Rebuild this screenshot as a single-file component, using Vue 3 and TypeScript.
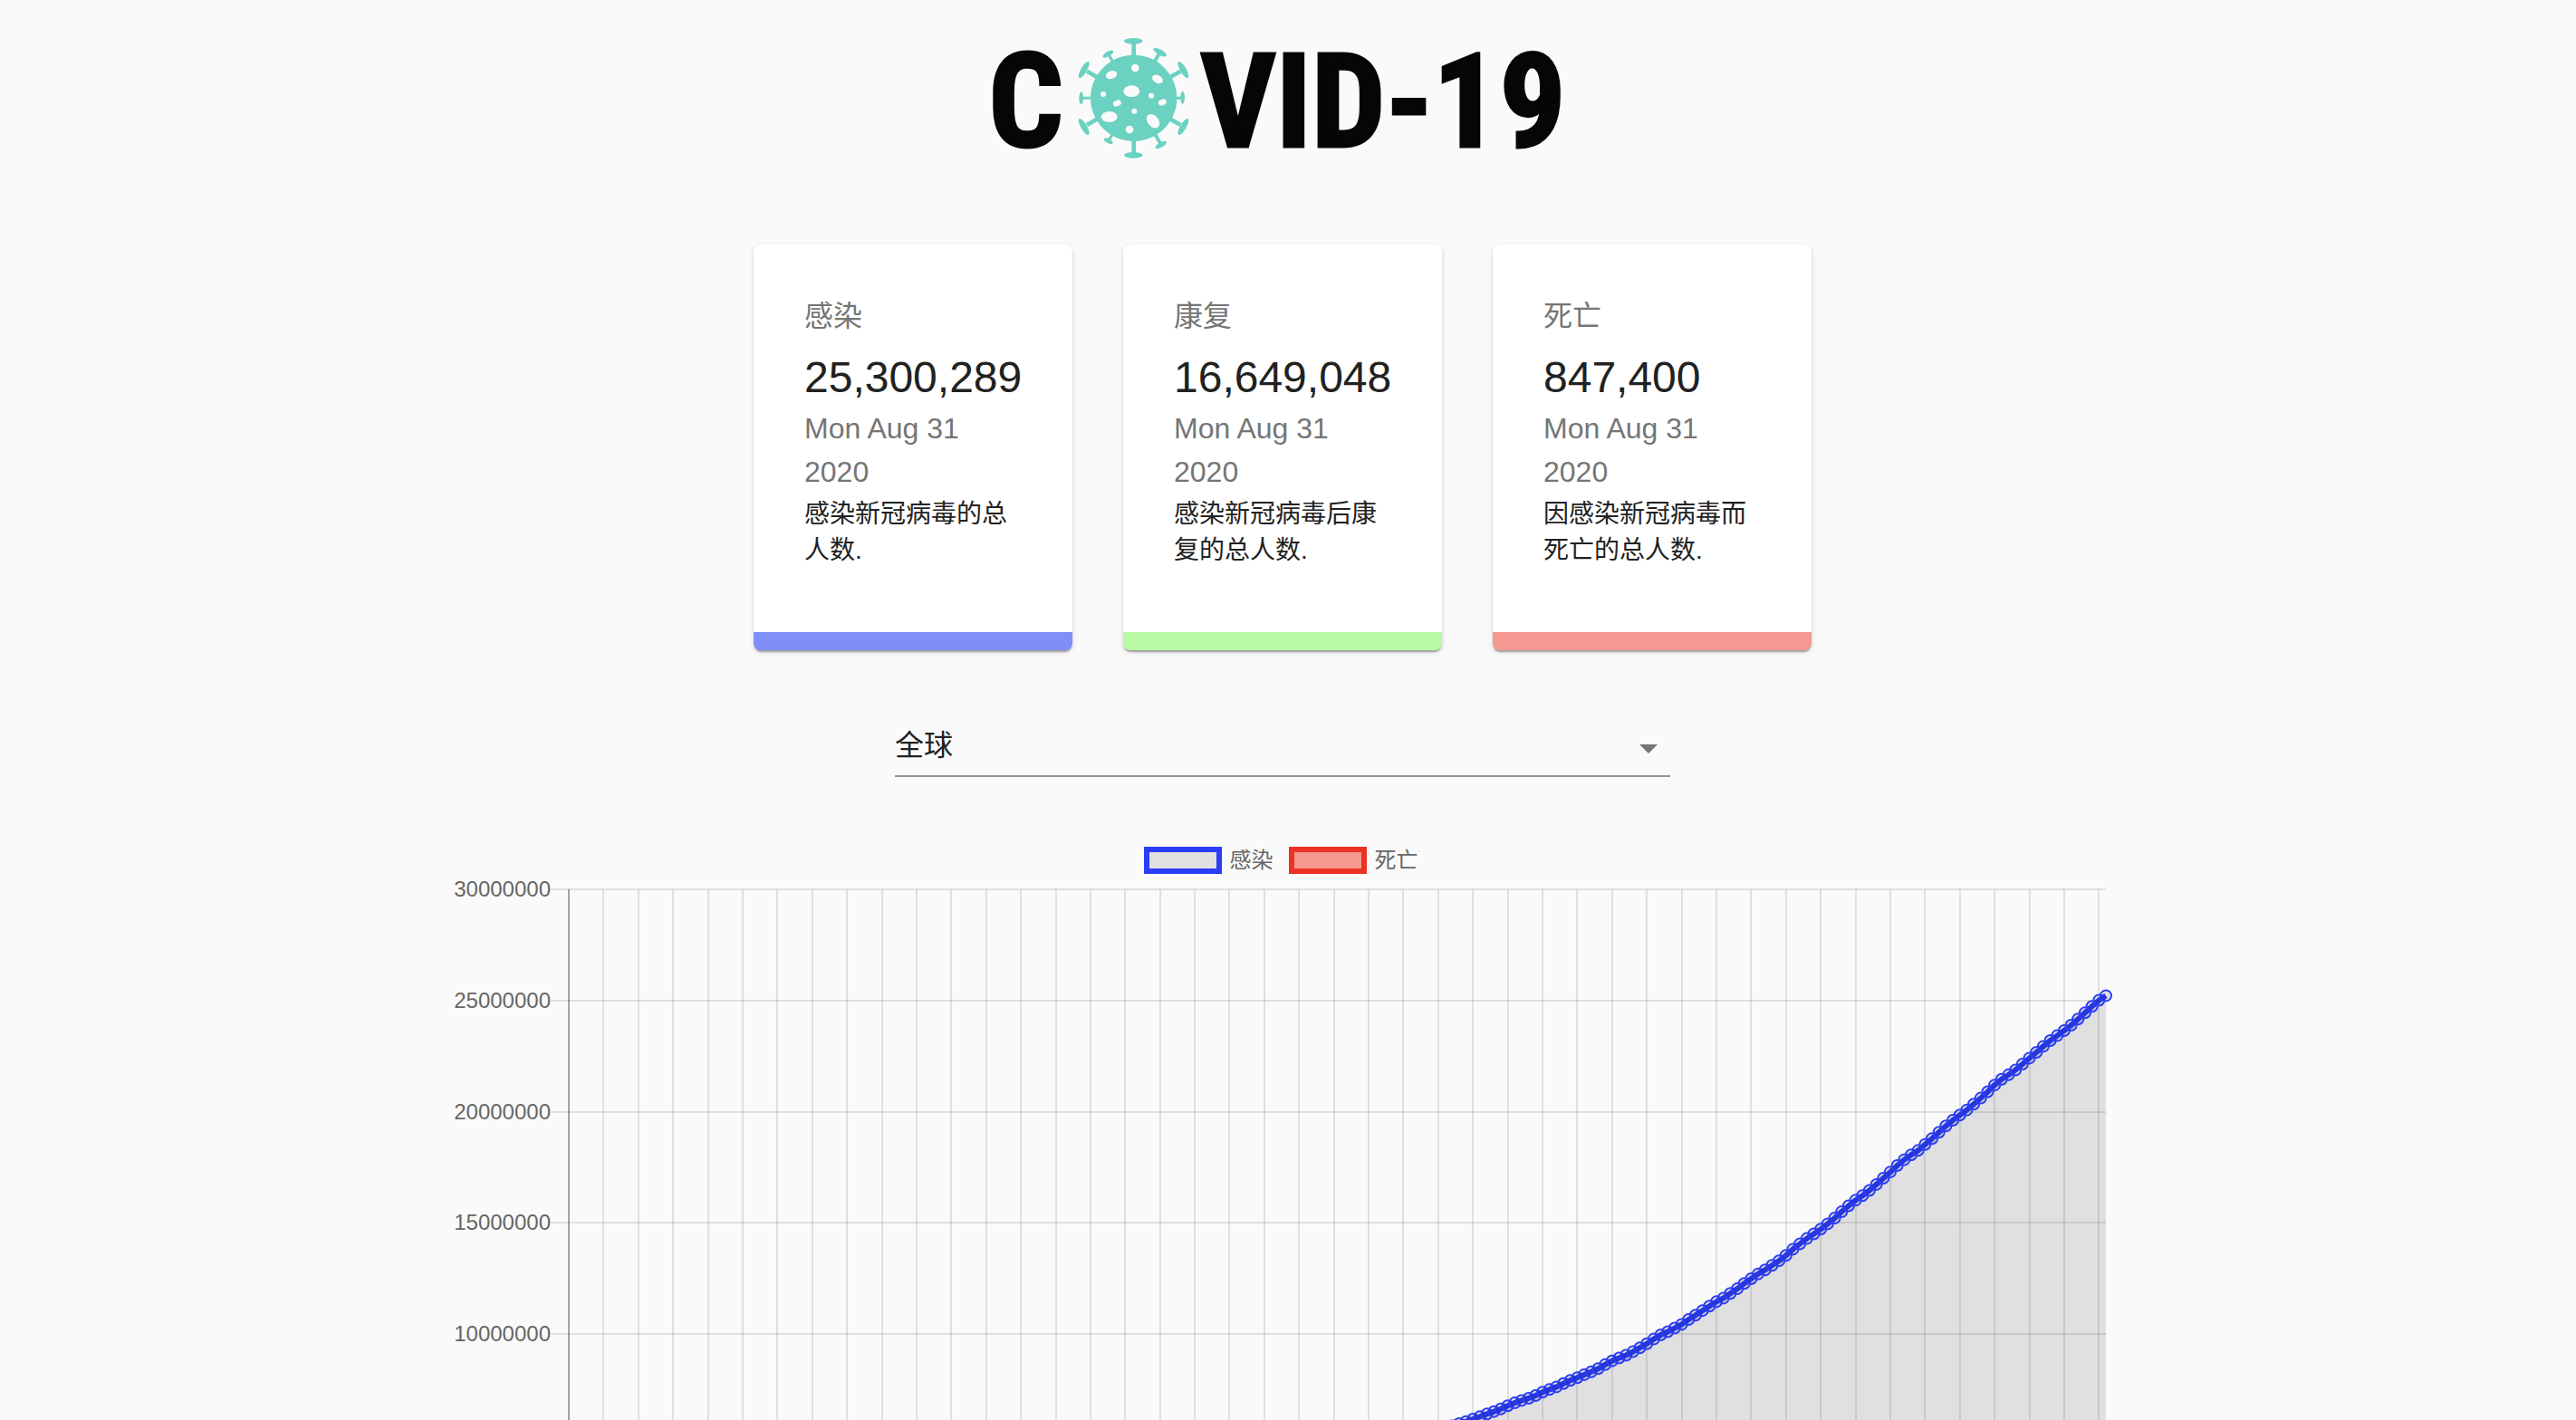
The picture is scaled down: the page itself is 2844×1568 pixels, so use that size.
<script setup lang="ts">
import { ref } from 'vue'

interface Stat {
  key: string
  title: string
  value: number
  note: string
}

const updated = 'Mon Aug 31 2020'
const stats: Stat[] = [
  { key: 'infected', title: '感染', value: 25300289, note: '感染新冠病毒的总人数.' },
  { key: 'recovered', title: '康复', value: 16649048, note: '感染新冠病毒后康复的总人数.' },
  { key: 'deaths', title: '死亡', value: 847400, note: '因感染新冠病毒而死亡的总人数.' },
]
const format = (n: number) => n.toLocaleString('en-US')

const country = ref('global')

/* Plot geometry, in viewBox units */
const plot = { left: 128, right: 1825, top: 14, days: 222, height: 760 }
const ticks = [30000000, 25000000, 20000000, 15000000, 10000000]
const tickY = (i: number) => Math.round(plot.top + i * 122.8)
const dayX = (i: number) => plot.left + (i * (plot.right - plot.left)) / (plot.days - 1)
const columns = Array.from({ length: 44 }, (_, i) => Math.round(dayX((i + 1) * 5)))

/* Cumulative infections in ten thousands, one value per day from day 120 */
const curve: number[] = [
  515, 525, 535, 546, 556, 567, 577, 588, 598, 607, 618, 629, 641, 652, 664, 678, 691, 702, 712, 724,
  739, 751, 763, 778, 792, 804, 818, 831, 845, 863, 880, 893, 905, 921, 939, 957, 978, 997, 1011, 1027,
  1044, 1066, 1085, 1106, 1126, 1146, 1162, 1183, 1204, 1228, 1249, 1271, 1289, 1309, 1330, 1354, 1382, 1406, 1430, 1451,
  1472, 1496, 1522, 1550, 1577, 1602, 1623, 1646, 1673, 1701, 1729, 1758, 1784, 1806, 1826, 1853, 1879, 1908, 1936, 1962,
  1985, 2008, 2034, 2061, 2090, 2120, 2146, 2166, 2188, 2214, 2241, 2267, 2294, 2320, 2342, 2365, 2389, 2417, 2445, 2474,
  2501, 2522,
]
const early = 120
const valueY = (v: number) => plot.top + ((3000 - v) * 122.8) / 500
const points = curve.map((v, i) => ({ x: dayX(early + i), y: valueY(v) }))
const line = points.map((p) => `${p.x.toFixed(1)},${p.y.toFixed(1)}`).join(' ')
const area = `${points[0].x},${valueY(0)} ${line} ${plot.right},${valueY(0)}`
</script>

<template>
  <main class="page">
    <h1 class="logo" aria-label="COVID-19">
      <span>C</span>
      <svg class="virus" viewBox="270 65 369 399" aria-hidden="true">
        <g fill="none" stroke="#6bd1c1" stroke-width="14">
          <path d="M455 75V455M300 175L610 353M300 353L610 175" />
          <path d="M280 264H618" stroke-width="9" />
          <path d="M542 112L455 264L545 417" stroke-width="12" />
          <path d="M372 120L455 264L372 405" stroke-width="9" />
        </g>
        <g fill="#6bd1c1">
          <circle cx="455" cy="264" r="143" />
          <ellipse cx="454" cy="75" rx="31" ry="10" />
          <ellipse cx="454" cy="453" rx="31" ry="10" />
          <ellipse cx="281" cy="264" rx="7" ry="21" />
          <ellipse cx="617" cy="262" rx="7" ry="21" />
          <ellipse cx="290" cy="170" rx="10" ry="31" transform="rotate(30 290 170)" />
          <ellipse cx="619" cy="170" rx="10" ry="31" transform="rotate(-30 619 170)" />
          <ellipse cx="290" cy="359" rx="10" ry="31" transform="rotate(-30 290 359)" />
          <ellipse cx="619" cy="359" rx="10" ry="31" transform="rotate(30 619 359)" />
          <ellipse cx="370" cy="118" rx="20" ry="8" transform="rotate(-30 370 118)" />
          <ellipse cx="542" cy="112" rx="25" ry="9" transform="rotate(30 542 112)" />
          <ellipse cx="371" cy="406" rx="16" ry="7" transform="rotate(28 371 406)" />
          <ellipse cx="545" cy="419" rx="21" ry="8" transform="rotate(-30 545 419)" />
        </g>
        <g fill="#fafafa">
          <circle cx="460" cy="164" r="13" />
          <ellipse cx="381" cy="187" rx="19" ry="13" transform="rotate(-18 381 187)" />
          <ellipse cx="534" cy="201" rx="19" ry="13" transform="rotate(28 534 201)" />
          <ellipse cx="448" cy="241" rx="27" ry="19" />
          <circle cx="354" cy="251" r="9" />
          <circle cx="513" cy="256" r="9" />
          <ellipse cx="400" cy="281" rx="14" ry="10" transform="rotate(-22 400 281)" />
          <ellipse cx="550" cy="278" rx="14" ry="10" transform="rotate(-22 550 278)" />
          <circle cx="457" cy="307" r="9" />
          <ellipse cx="374" cy="326" rx="27" ry="18" />
          <ellipse cx="519" cy="340" rx="26" ry="18" transform="rotate(52 519 340)" />
          <circle cx="441" cy="368" r="13" />
        </g>
      </svg>
      <span>VID-19</span>
    </h1>

    <section class="cards">
      <article v-for="s in stats" :key="s.key" class="card" :class="s.key">
        <h2 class="card-title">{{ s.title }}</h2>
        <p class="card-value">{{ format(s.value) }}</p>
        <p class="card-date">{{ updated }}</p>
        <p class="card-note">{{ s.note }}</p>
      </article>
    </section>

    <div class="picker">
      <select v-model="country" aria-label="国家">
        <option value="global">全球</option>
      </select>
      <svg class="arrow" viewBox="0 0 20 10" aria-hidden="true"><path d="M0 0h20L10 10z" /></svg>
    </div>

    <figure class="chart">
      <figcaption class="legend">
        <span class="swatch swatch-infected"></span>
        <span class="legend-label">感染</span>
        <span class="swatch swatch-deaths"></span>
        <span class="legend-label">死亡</span>
      </figcaption>
      <svg class="plot" :viewBox="`0 0 1832 ${plot.height}`" role="img" aria-label="感染与死亡趋势">
        <g class="grid">
          <path v-for="(t, i) in ticks" :key="t" :d="`M108 ${tickY(i)}H${plot.right}`" />
          <path v-for="x in columns" :key="x" :d="`M${x} ${plot.top}V${plot.height}`" />
        </g>
        <path class="axis" :d="`M${plot.left} ${plot.top}V${plot.height}`" />
        <g class="ticks">
          <text v-for="(t, i) in ticks" :key="t" x="108" :y="tickY(i) + 8">{{ t }}</text>
        </g>
        <polygon class="area" :points="area" />
        <polyline class="line" :points="line" />
        <circle v-for="p in points" :key="p.x" class="dot" :cx="p.x" :cy="p.y" r="6" />
      </svg>
    </figure>
  </main>
</template>

<style>
body {
  margin: 0;
  background: #fafafa;
}
</style>

<style scoped>
.page {
  display: flex;
  flex-direction: column;
  align-items: center;
  box-sizing: border-box;
  height: 100vh;
  padding-right: 12px;
  overflow: hidden;
  color: #212121;
  font-family: "Liberation Sans", "Noto Sans CJK SC", sans-serif;
}

.logo {
  display: flex;
  flex: none;
  align-items: center;
  gap: 12px;
  height: 216px;
  margin: 0 0 54px;
  padding-right: 12px;
  color: #050706;
  font: bold 145px/200px "Liberation Sans Narrow", "Roboto Condensed", "Open Sans Condensed", Roboto, sans-serif;
  -webkit-text-stroke: 3px #050706;
}

.logo span {
  padding-top: 8px;
}

.virus {
  flex: none;
  width: 123px;
  height: 133px;
  margin-left: 4px;
}

.cards {
  display: flex;
  flex: none;
  gap: 56px;
}

.card {
  box-sizing: border-box;
  width: 352px;
  padding: 55px 56px 70px;
  border-bottom: 20px solid;
  border-radius: 8px;
  background: #fff;
  box-shadow:
    0 4px 2px -2px rgba(0, 0, 0, 0.2),
    0 2px 2px rgba(0, 0, 0, 0.14),
    0 2px 6px rgba(0, 0, 0, 0.12);
}

.infected {
  border-color: #7f8ffa;
}

.recovered {
  border-color: #b9fba4;
}

.deaths {
  border-color: #f49891;
}

.card-title,
.card-value,
.card-date,
.card-note {
  margin: 0;
  font-weight: 400;
}

.card-title {
  margin-bottom: 12px;
  color: #757575;
  font-size: 32px;
  line-height: 48px;
}

.card-value {
  font-size: 48px;
  line-height: 64px;
}

.card-date {
  margin-bottom: 3px;
  color: #757575;
  font-size: 32px;
  line-height: 48px;
}

.card-note {
  font-size: 28px;
  line-height: 40px;
}

.picker {
  position: relative;
  flex: none;
  width: 856px;
  margin: 76px 0 77px;
}

.picker select {
  display: block;
  box-sizing: border-box;
  width: 100%;
  height: 64px;
  padding: 0 48px 4px 0;
  border: 0;
  border-bottom: 2px solid #949494;
  border-radius: 0;
  outline: 0;
  background: none;
  color: inherit;
  font: inherit;
  font-size: 32px;
  appearance: none;
}

.arrow {
  position: absolute;
  top: 28px;
  right: 14px;
  width: 20px;
  height: 10px;
  fill: #757575;
  pointer-events: none;
}

.chart {
  flex: none;
  width: 100%;
  max-width: 1832px;
  margin: 0;
}

.legend {
  display: flex;
  align-items: center;
  justify-content: center;
  height: 30px;
  margin: 0 4px 3px 0;
  color: #666;
  font-size: 24px;
  line-height: 30px;
}

.legend-label {
  margin: 0 17px 0 9px;
}

.legend-label:last-child {
  margin-right: 0;
}

.swatch {
  box-sizing: border-box;
  width: 86px;
  height: 30px;
  border: 6px solid;
}

.swatch-infected {
  border-color: #2b3df7;
  background: #e1e1e1;
}

.swatch-deaths {
  border-color: #eb3324;
  background: #f49890;
}

.plot {
  display: block;
  width: 100%;
}

.grid {
  fill: none;
  stroke: rgba(0, 0, 0, 0.1);
  stroke-width: 2;
}

.axis {
  stroke: rgba(0, 0, 0, 0.35);
  stroke-width: 2;
}

.ticks {
  fill: #666;
  font-size: 24px;
  text-anchor: end;
}

.area {
  fill: rgba(0, 0, 0, 0.1);
}

.line {
  fill: none;
  stroke: #2b3df7;
  stroke-width: 6;
}

.dot {
  fill: rgba(0, 0, 0, 0.1);
  stroke: #2b3df7;
  stroke-width: 2;
}
</style>
